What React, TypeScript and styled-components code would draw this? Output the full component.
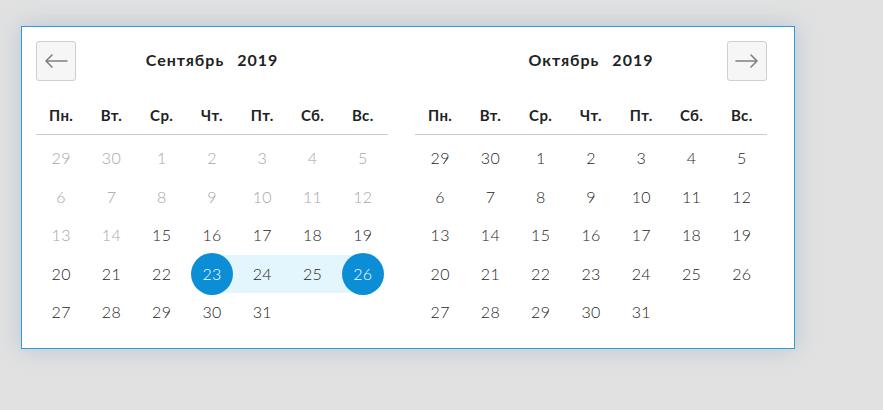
import React from "react";
import styled, { createGlobalStyle, css } from "styled-components";

const GlobalStyle = createGlobalStyle`
  html, body {
    margin: 0;
    padding: 0;
    background: #e1e1e1;
    font-family: Lato, "Noto Sans", "Liberation Sans", sans-serif;
  }
`;

type DayKind = "muted" | "normal";
type RangePos = "none" | "start" | "middle" | "end";

interface Day {
  label: number;
  kind: DayKind;
  range?: RangePos;
}

const WEEKDAYS = ["Пн.", "Вт.", "Ср.", "Чт.", "Пт.", "Сб.", "Вс."];

const Page = styled.div`
  padding: 26px 0 0 21px;
  min-height: 410px;
  box-sizing: border-box;
`;

const Card = styled.div`
  width: 774px;
  box-sizing: border-box;
  background: #fff;
  border: 1px solid #2e9ad6;
  box-shadow: 0 0 22px rgba(110, 150, 185, 0.35);
  padding: 14px 26px 16px 14px;
  display: flex;
  gap: 27px;
`;

const Month = styled.div`
  width: 352px;
  display: flex;
  flex-direction: column;
`;

const Header = styled.div`
  display: grid;
  grid-template-columns: 40px 1fr 40px;
  align-items: center;
  height: 40px;
`;

const Title = styled.div`
  grid-column: 2;
  text-align: center;
  font-weight: 700;
  font-size: 16px;
  color: #222;
  letter-spacing: 1px;
  padding-bottom: 3px;
`;

const Year = styled.span`
  margin-left: 13px;
`;

const NavButton = styled.button<{ $side: "left" | "right" }>`
  grid-column: ${({ $side }) => ($side === "left" ? 1 : 3)};
  grid-row: 1;
  width: 40px;
  height: 40px;
  padding: 0;
  border: 1px solid #cfcfcf;
  border-radius: 3px;
  background: #f6f6f6;
  display: flex;
  align-items: center;
  justify-content: center;
  cursor: pointer;
`;

const WeekRow = styled.div`
  margin-top: 15px;
  height: 38px;
  display: grid;
  grid-template-columns: repeat(7, 1fr);
  align-items: center;
  border-bottom: 1px solid #c9c9c9;
`;

const WeekDay = styled.div`
  text-align: center;
  font-weight: 700;
  font-size: 15px;
  letter-spacing: 0.4px;
  color: #222;
`;

const DaysGrid = styled.div`
  margin-top: 4px;
  display: grid;
  grid-template-columns: repeat(7, 1fr);
  grid-auto-rows: 38.5px;
`;

const bandLeft = css`
  &::before {
    content: "";
    position: absolute;
    top: 0;
    bottom: 0;
    margin: auto 0;
    height: 38px;
    left: 0;
    right: 50%;
    background: #e3f5fd;
  }
`;

const bandRight = css`
  &::after {
    content: "";
    position: absolute;
    top: 0;
    bottom: 0;
    margin: auto 0;
    height: 38px;
    left: 50%;
    right: 0;
    background: #e3f5fd;
  }
`;

const Cell = styled.div<{ $range: RangePos }>`
  position: relative;
  display: flex;
  align-items: center;
  justify-content: center;
  ${({ $range }) => ($range === "start" ? bandRight : "")}
  ${({ $range }) => ($range === "end" ? bandLeft : "")}
  ${({ $range }) => ($range === "middle" ? css`${bandLeft}${bandRight}` : "")}
`;

const DayLabel = styled.span<{ $kind: DayKind; $selected: boolean }>`
  position: relative;
  z-index: 1;
  width: 42px;
  height: 42px;
  border-radius: 50%;
  display: flex;
  align-items: center;
  justify-content: center;
  padding-bottom: 1px;
  box-sizing: border-box;
  font-size: 16px;
  font-weight: 300;
  letter-spacing: 0.3px;
  color: ${({ $kind, $selected }) =>
    $selected ? "#fff" : $kind === "muted" ? "#a6a6a6" : "#1e1e1e"};
  background: ${({ $selected }) => ($selected ? "#0b8ed5" : "transparent")};
`;

const Arrow = ({ dir }: { dir: "left" | "right" }) => (
  <svg width="24" height="14" viewBox="0 0 24 14" fill="none">
    {dir === "left" ? (
      <path d="M23 7H2M8 1L2 7l6 6" stroke="#808080" strokeWidth="1.6" strokeLinecap="round" strokeLinejoin="round" />
    ) : (
      <path d="M1 7h21M16 1l6 6-6 6" stroke="#808080" strokeWidth="1.6" strokeLinecap="round" strokeLinejoin="round" />
    )}
  </svg>
);

const range = (from: number, to: number) =>
  Array.from({ length: to - from + 1 }, (_, i) => from + i);

const septemberDays: Day[] = [
  ...[29, 30].map((d) => ({ label: d, kind: "muted" as DayKind })),
  ...range(1, 14).map((d) => ({ label: d, kind: "muted" as DayKind })),
  ...range(15, 31).map((d) => ({
    label: d,
    kind: "normal" as DayKind,
    range: (d === 23 ? "start" : d === 26 ? "end" : d === 24 || d === 25 ? "middle" : "none") as RangePos,
  })),
];

const octoberDays: Day[] = [
  ...[29, 30].map((d) => ({ label: d, kind: "normal" as DayKind })),
  ...range(1, 31).map((d) => ({ label: d, kind: "normal" as DayKind })),
];

interface MonthProps {
  name: string;
  year: number;
  days: Day[];
  nav: "left" | "right";
}

const MonthView = ({ name, year, days, nav }: MonthProps) => (
  <Month>
    <Header>
      {nav === "left" && (
        <NavButton $side="left" aria-label="Предыдущий месяц">
          <Arrow dir="left" />
        </NavButton>
      )}
      <Title>
        {name}
        <Year>{year}</Year>
      </Title>
      {nav === "right" && (
        <NavButton $side="right" aria-label="Следующий месяц">
          <Arrow dir="right" />
        </NavButton>
      )}
    </Header>
    <WeekRow>
      {WEEKDAYS.map((w) => (
        <WeekDay key={w}>{w}</WeekDay>
      ))}
    </WeekRow>
    <DaysGrid>
      {days.map((d, i) => {
        const r = d.range ?? "none";
        return (
          <Cell key={i} $range={r}>
            <DayLabel $kind={d.kind} $selected={r === "start" || r === "end"}>
              {d.label}
            </DayLabel>
          </Cell>
        );
      })}
    </DaysGrid>
  </Month>
);

export default function App() {
  return (
    <>
      <GlobalStyle />
      <Page>
        <Card>
          <MonthView name="Сентябрь" year={2019} days={septemberDays} nav="left" />
          <MonthView name="Октябрь" year={2019} days={octoberDays} nav="right" />
        </Card>
      </Page>
    </>
  );
}
